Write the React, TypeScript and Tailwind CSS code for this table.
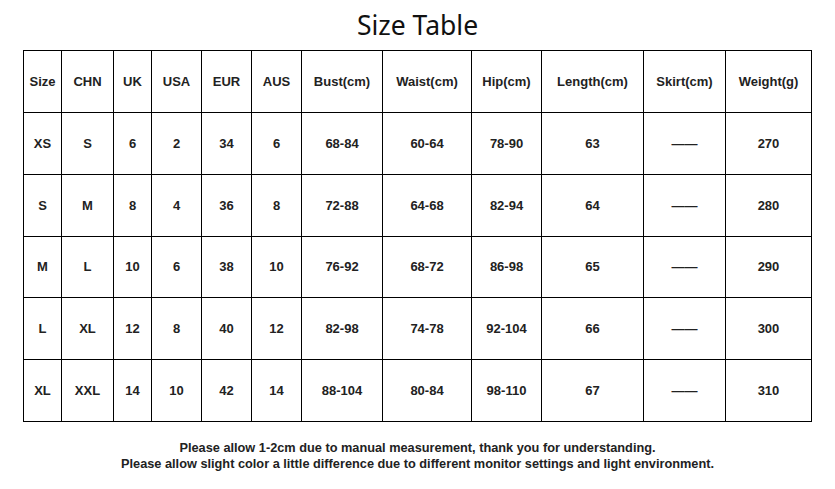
import React from "react";

const widths = [38, 52, 38, 50, 50, 50, 81, 89, 70, 102, 82, 86];
const header = ["Size", "CHN", "UK", "USA", "EUR", "AUS", "Bust(cm)", "Waist(cm)", "Hip(cm)", "Length(cm)", "Skirt(cm)", "Weight(g)"];
const rows = [
  ["XS", "S", "6", "2", "34", "6", "68-84", "60-64", "78-90", "63", "——", "270"],
  ["S", "M", "8", "4", "36", "8", "72-88", "64-68", "82-94", "64", "——", "280"],
  ["M", "L", "10", "6", "38", "10", "76-92", "68-72", "86-98", "65", "——", "290"],
  ["L", "XL", "12", "8", "40", "12", "82-98", "74-78", "92-104", "66", "——", "300"],
  ["XL", "XXL", "14", "10", "42", "14", "88-104", "80-84", "98-110", "67", "——", "310"],
];
const rowH = ["h-[62px]", "h-[62px]", "h-[61px]", "h-[62px]", "h-[62px]"];

export default function App() {
  return (
    <div className="w-[835px] h-[489px] bg-white flex flex-col items-center text-[#222]">
      <div className="h-[50px] flex items-center justify-center text-[26.5px] leading-[36px] pb-[1px] font-['Noto_Sans',sans-serif] text-[#111]">
        Size Table
      </div>
      <table className="border-collapse font-['Liberation_Sans',Arial,sans-serif] font-bold text-[13px] table-fixed">
        <colgroup>
          {widths.map((w, i) => (
            <col key={i} style={{ width: w }} />
          ))}
        </colgroup>
        <tbody>
          <tr className="h-[62px]">
            {header.map((h, i) => (
              <td key={i} className="border border-black text-center p-0">
                {h}
              </td>
            ))}
          </tr>
          {rows.map((r, ri) => (
            <tr key={ri} className={rowH[ri]}>
              {r.map((c, ci) => (
                <td key={ci} className="border border-black text-center p-0">
                  {c}
                </td>
              ))}
            </tr>
          ))}
        </tbody>
      </table>
      <div className="mt-[18px] text-center font-['Liberation_Sans',Arial,sans-serif] font-bold text-[12.75px] leading-[16px] text-[#222]">
        <div>Please allow 1-2cm due to manual measurement, thank you for understanding.</div>
        <div>Please allow slight color a little difference due to different monitor settings and light environment.</div>
      </div>
    </div>
  );
}
